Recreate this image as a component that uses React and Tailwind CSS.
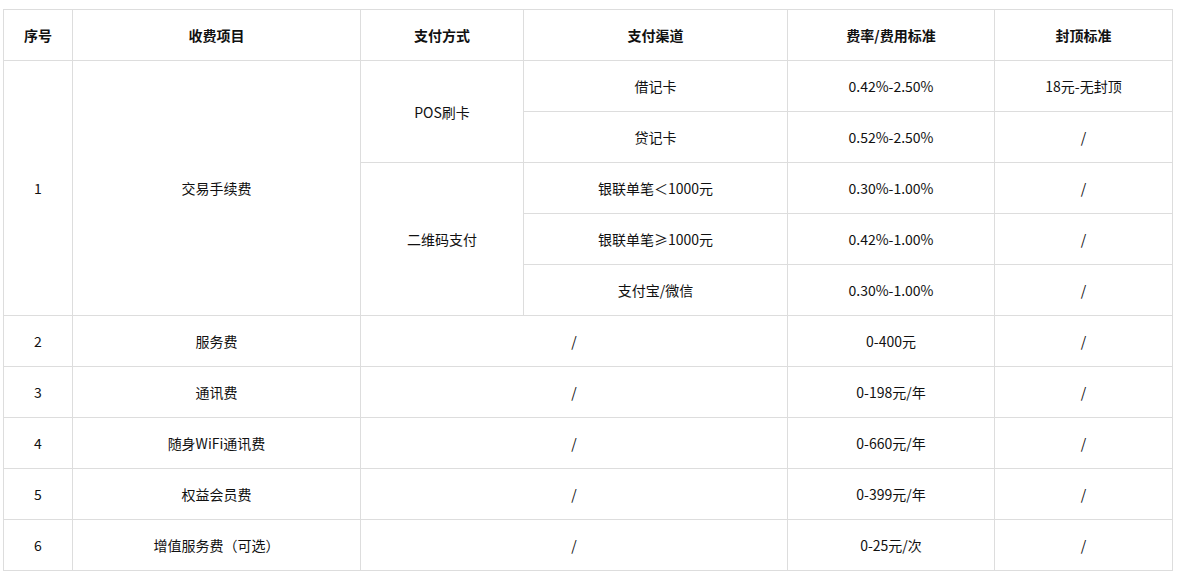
export default function App() {
  const td = "border border-[#dddddd] text-center align-middle p-0 h-[51px]";
  const th = "border border-[#dddddd] text-center align-middle p-0 h-[51px] font-bold";
  const rows = [
    ["2", "服务费", "0-400元"],
    ["3", "通讯费", "0-198元/年"],
    ["4", "随身WiFi通讯费", "0-660元/年"],
    ["5", "权益会员费", "0-399元/年"],
    ["6", "增值服务费（可选）", "0-25元/次"],
  ];
  return (
    <div className="bg-white w-[1177px] h-[573px] pt-[9px] pl-[3px]" style={{ fontFamily: '"Noto Sans CJK SC", "Noto Sans", sans-serif' }}>
      <table className="table-fixed border-collapse text-[14px] leading-[20px] text-[#111111] w-[1169px]">
        <colgroup>
          <col className="w-[69px]" />
          <col className="w-[288px]" />
          <col className="w-[163px]" />
          <col className="w-[264px]" />
          <col className="w-[207px]" />
          <col className="w-[178px]" />
        </colgroup>
        <thead>
          <tr>
            <th className={th}>序号</th>
            <th className={th}>收费项目</th>
            <th className={th}>支付方式</th>
            <th className={th}>支付渠道</th>
            <th className={th}>费率/费用标准</th>
            <th className={th}>封顶标准</th>
          </tr>
        </thead>
        <tbody>
          <tr>
            <td className={td} rowSpan={5}>1</td>
            <td className={td} rowSpan={5}>交易手续费</td>
            <td className={td} rowSpan={2}>POS刷卡</td>
            <td className={td}>借记卡</td>
            <td className={td}>0.42%-2.50%</td>
            <td className={td}>18元-无封顶</td>
          </tr>
          <tr>
            <td className={td}>贷记卡</td>
            <td className={td}>0.52%-2.50%</td>
            <td className={td}>/</td>
          </tr>
          <tr>
            <td className={td} rowSpan={3}>二维码支付</td>
            <td className={td}>银联单笔＜1000元</td>
            <td className={td}>0.30%-1.00%</td>
            <td className={td}>/</td>
          </tr>
          <tr>
            <td className={td}>银联单笔≥1000元</td>
            <td className={td}>0.42%-1.00%</td>
            <td className={td}>/</td>
          </tr>
          <tr>
            <td className={td}>支付宝/微信</td>
            <td className={td}>0.30%-1.00%</td>
            <td className={td}>/</td>
          </tr>
          {rows.map((r) => (
            <tr key={r[0]}>
              <td className={td}>{r[0]}</td>
              <td className={td}>{r[1]}</td>
              <td className={td} colSpan={2}>/</td>
              <td className={td}>{r[2]}</td>
              <td className={td}>/</td>
            </tr>
          ))}
        </tbody>
      </table>
    </div>
  );
}
